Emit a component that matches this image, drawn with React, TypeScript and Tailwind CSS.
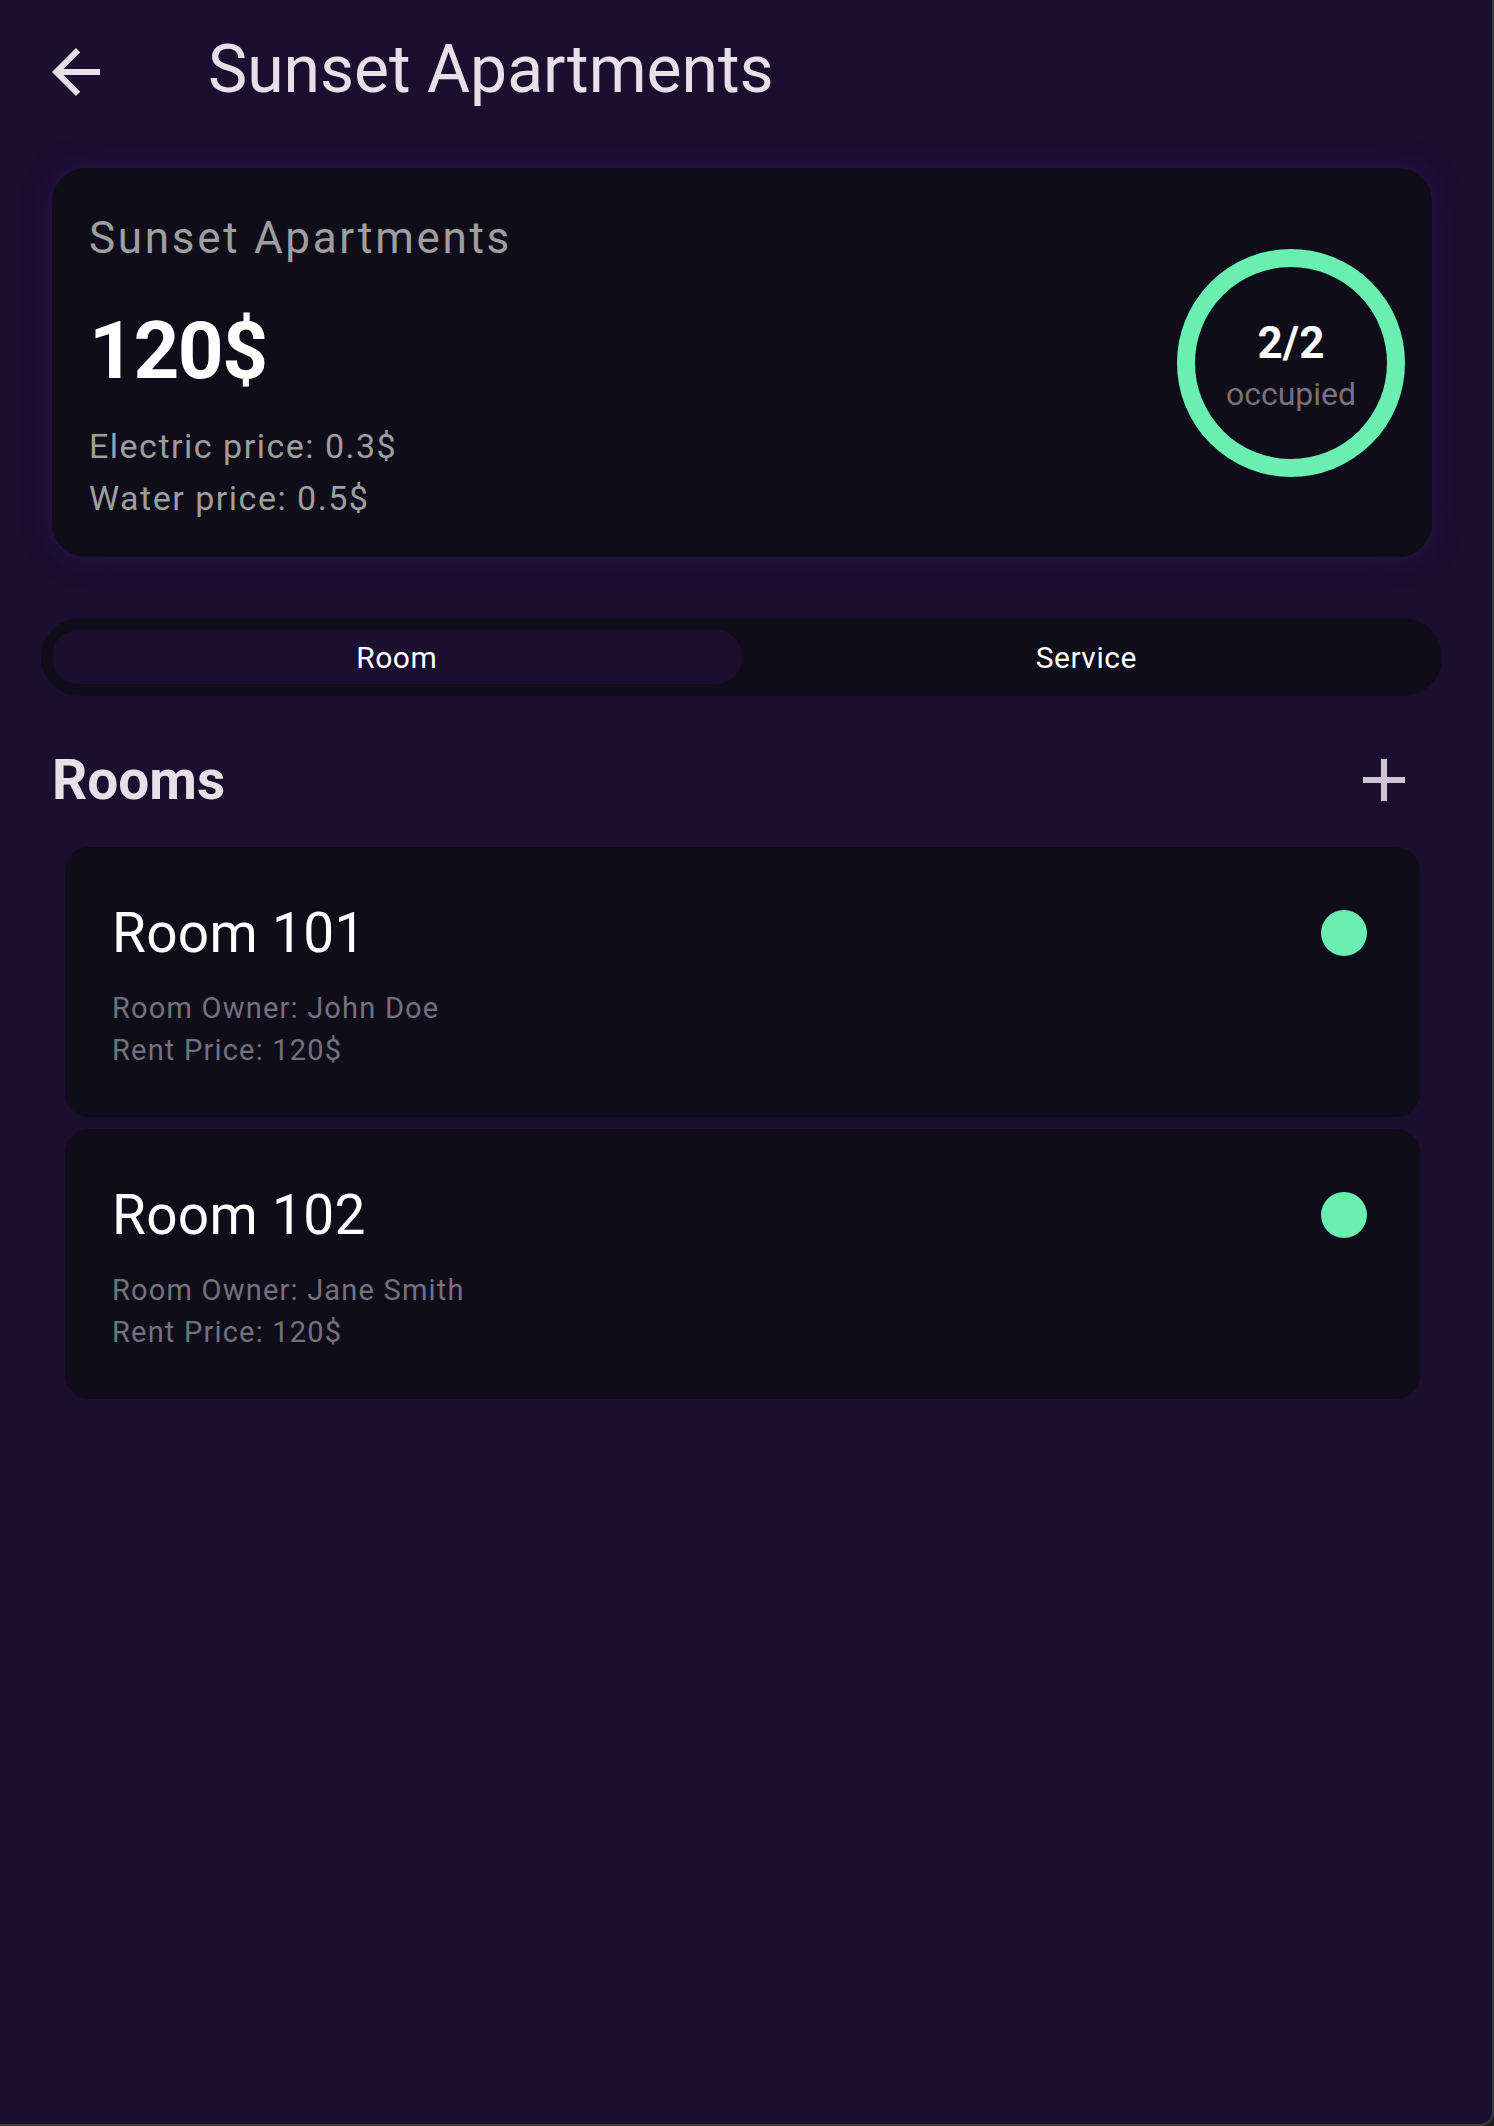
import React from "react";

const font = { fontFamily: "Roboto, 'Noto Sans', Arial, sans-serif" };

function RoomCard({ name, owner }: { name: string; owner: string }) {
  return (
    <div className="h-[270px] w-[1355px] rounded-[24px] bg-[#100d1b] pl-[47px] pr-[53px] pt-[54px]">
      <div className="flex items-center justify-between">
        <div className="text-[55px] leading-[64px] tracking-[0.3px] text-white">{name}</div>
        <div className="h-[46px] w-[46px] rounded-full bg-[#69efb0]" />
      </div>
      <div className="mt-[22px] text-[29px] leading-[42px] tracking-[1.2px] text-[#75707f]">
        <div>Room Owner: {owner}</div>
        <div>Rent Price: 120$</div>
      </div>
    </div>
  );
}

export default function App() {
  return (
    <div className="h-[2126px] w-[1494px] bg-[#1e1e1e]" style={font}>
      <div className="h-[2126px] w-[1494px] overflow-hidden rounded-br-[14px] border-b-2 border-r-2 border-[#3c3c3c] bg-[#1b0e2e]">
        {/* Header */}
        <div className="flex h-[141px] items-start">
          <svg
            className="ml-[40px] mt-[36px] h-[72px] w-[72px]"
            viewBox="0 0 24 24"
            fill="#e6e0e9"
          >
            <path d="M20 11H7.83l5.59-5.59L12 4l-8 8 8 8 1.41-1.41L7.83 13H20v-2z" />
          </svg>
          <div className="ml-[96px] mt-[26px] text-[66px] leading-[88px] text-[#e6e0e9]">
            Sunset Apartments
          </div>
        </div>

        {/* Summary card */}
        <div className="ml-[52px] mt-[27px] flex h-[389px] w-[1380px] items-center justify-between rounded-[34px] bg-[#100d1b] pr-[27px] shadow-[0_0_30px_rgba(70,25,140,0.35)]">
          <div className="self-start pl-[37px] pt-[42px]">
            <div className="text-[44px] leading-[56px] tracking-[2.7px] text-[#9e9e9e]">
              Sunset Apartments
            </div>
            <div className="mt-[35px] text-[80px] font-bold leading-[100px] tracking-[-1.5px] text-white">
              120$
            </div>
            <div className="mt-[19px] text-[34px] leading-[52px] tracking-[1.5px] text-[#9e9e9e]">
              <div>Electric price: 0.3$</div>
              <div>Water price: 0.5$</div>
            </div>
          </div>
          <div className="relative h-[228px] w-[228px]">
            <svg className="h-[228px] w-[228px]" viewBox="0 0 228 228">
              <circle cx="114" cy="114" r="105" fill="none" stroke="#69efb0" strokeWidth="18" />
            </svg>
            <div className="absolute inset-0 flex flex-col items-center pt-[68px]">
              <div className="text-[44px] font-bold leading-[52px] text-white">2/2</div>
              <div className="mt-[3px] text-[32px] leading-[44px] text-[#77707f]">
                occupied
              </div>
            </div>
          </div>
        </div>

        {/* Tabs */}
        <div className="ml-[41px] mt-[61px] flex h-[78px] w-[1401px] rounded-[39px] bg-[#100d1b] px-[11px] py-[12px]">
          <div className="flex h-[54px] flex-1 items-center justify-center rounded-[26px] bg-[#1b0e2e] text-[30px] tracking-[0.5px] text-white">
            Room
          </div>
          <div className="flex h-[54px] flex-1 items-center justify-center text-[30px] tracking-[0.5px] text-white">
            Service
          </div>
        </div>

        {/* Rooms header */}
        <div className="ml-[52px] mt-[48px] flex w-[1368px] items-center justify-between">
          <div className="text-[55px] font-bold leading-[64px] text-[#e6e0e9]">Rooms</div>
          <svg className="h-[72px] w-[72px]" viewBox="0 0 24 24" fill="#cdc5d6">
            <path d="M19 13h-6v6h-2v-6H5v-2h6V5h2v6h6v2z" />
          </svg>
        </div>

        {/* Room list */}
        <div className="ml-[65px] mt-[31px] flex flex-col gap-[12px]">
          <RoomCard name="Room 101" owner="John Doe" />
          <RoomCard name="Room 102" owner="Jane Smith" />
        </div>
      </div>
    </div>
  );
}
